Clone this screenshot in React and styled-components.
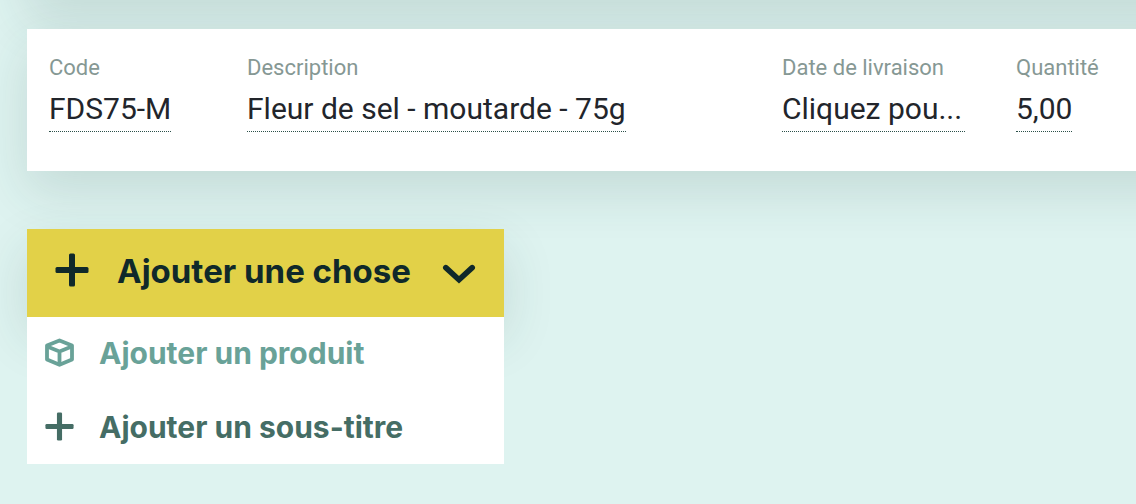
import React, { useState } from 'react'
import styled, { createGlobalStyle } from 'styled-components'

const shadow = '0 20px 52px rgba(37, 70, 65, 0.14)'

const GlobalStyle = createGlobalStyle`
  * {
    box-sizing: border-box;
  }
  body {
    margin: 0;
    background: #def3f0;
    font-family: Roboto, 'Liberation Sans', sans-serif;
    color: #22252b;
  }
  button {
    border: 0;
    padding: 0;
    background: none;
    font: inherit;
    color: inherit;
    text-align: left;
    cursor: pointer;
  }
`

const Page = styled.main`
  min-height: 100vh;
  padding-left: 27px;
  overflow: hidden;
`

const Lines = styled.div`
  display: flex;
  flex-direction: column;
  gap: 29px;
  margin-top: -142px;
  margin-right: -80px;
`

const Line = styled.section`
  display: grid;
  grid-template-columns: 198px minmax(0, 1fr) 234px 200px;
  align-items: start;
  min-height: 142px;
  padding: 24px 0 24px 22px;
  background: #fff;
  box-shadow: ${shadow};
`

const Field = styled.div`
  display: flex;
  flex-direction: column;
  align-items: flex-start;
`

const FieldLabel = styled.span`
  font-size: 22px;
  line-height: 30px;
  color: #869894;
`

const FieldValue = styled.button`
  width: ${({ $wide }) => ($wide ? '183px' : 'auto')};
  margin-top: 5px;
  padding-bottom: 1px;
  border-bottom: 1px dotted #2b5049;
  font-size: 30px;
  line-height: 42px;
  white-space: nowrap;
`

const Dropdown = styled.div`
  position: relative;
  width: 477px;
  margin-top: 58px;
  font-family: Inter, 'Liberation Sans', sans-serif;
  font-weight: 700;
`

const Toggle = styled.button`
  display: flex;
  align-items: center;
  width: 100%;
  height: 88px;
  padding: 0 28px 6px;
  background: #e2d148;
  box-shadow: ${shadow};
  color: #10292a;
  font-size: 33px;
  svg:last-child {
    margin-left: auto;
  }
`

const ToggleText = styled.span`
  margin-left: 28px;
  padding-top: 2px;
`

const Menu = styled.div`
  position: absolute;
  top: 100%;
  left: 0;
  right: 0;
  display: grid;
  gap: 1px;
  background: #fff;
`

const MenuItem = styled.button`
  display: flex;
  align-items: center;
  gap: 25px;
  width: 100%;
  height: 73px;
  padding: 0 18px 2px;
  color: ${({ $active }) => ($active ? '#69a298' : '#456d65')};
  font-size: 30px;
`

function PlusIcon({ size }) {
  return (
    <svg width={size} height={size} viewBox="0 0 34 34" fill="currentColor" aria-hidden="true">
      <rect x="14" y="0.5" width="6" height="33" rx="1.5" />
      <rect x="0.5" y="14" width="33" height="6" rx="1.5" />
    </svg>
  )
}

function ChevronIcon() {
  return (
    <svg width="34" height="34" viewBox="0 0 34 34" fill="none" stroke="currentColor" strokeWidth="5.6" aria-hidden="true">
      <path d="M3.8 14.6 17 26.8 30.2 14.6" strokeLinecap="round" />
    </svg>
  )
}

function BoxIcon() {
  return (
    <svg width="29" height="29" viewBox="0 0 29 29" fill="none" stroke="currentColor" strokeWidth="3.8" strokeLinejoin="round" aria-hidden="true">
      <path d="M14.5 2.4 27 7.6V21.4L14.5 26.8 2 21.4V7.6Z" />
      <path d="M2.2 8.4 14.5 13.4 26.8 8.4M14.5 13.4V26" />
    </svg>
  )
}

const fields = [
  { id: 'code', label: 'Code', value: 'FDS75-M' },
  { id: 'description', label: 'Description', value: 'Fleur de sel - moutarde - 75g' },
  { id: 'date', label: 'Date de livraison', value: 'Cliquez pou...', wide: true },
  { id: 'quantite', label: 'Quantité', value: '5,00' },
]

export default function App() {
  const [open, setOpen] = useState(true)

  return (
    <>
      <GlobalStyle />
      <Page>
        <Lines>
          <Line />
          <Line>
            {fields.map(({ id, label, value, wide }) => (
              <Field key={id}>
                <FieldLabel id={`${id}-label`}>{label}</FieldLabel>
                <FieldValue id={id} type="button" aria-labelledby={`${id}-label ${id}`} $wide={wide}>
                  {value}
                </FieldValue>
              </Field>
            ))}
          </Line>
        </Lines>
        <Dropdown>
          <Toggle type="button" aria-expanded={open} onClick={() => setOpen(!open)}>
            <PlusIcon size={34} />
            <ToggleText>Ajouter une chose</ToggleText>
            <ChevronIcon />
          </Toggle>
          {open && (
            <Menu>
              <MenuItem type="button" $active>
                <BoxIcon />
                Ajouter un produit
              </MenuItem>
              <MenuItem type="button">
                <PlusIcon size={29} />
                Ajouter un sous-titre
              </MenuItem>
            </Menu>
          )}
        </Dropdown>
      </Page>
    </>
  )
}
